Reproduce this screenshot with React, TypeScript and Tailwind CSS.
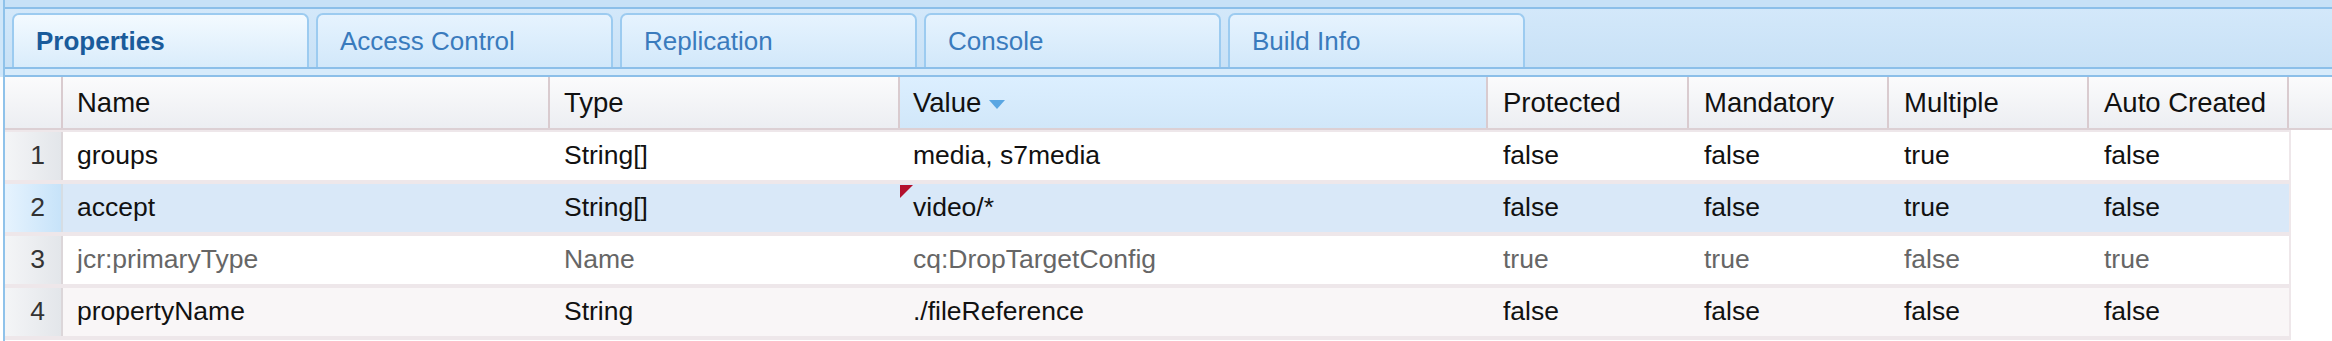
import React from "react";

type Row = {
  name: string;
  type: string;
  value: string;
  prot: string;
  mand: string;
  multi: string;
  auto: string;
};

const rows: Row[] = [
  { name: "groups", type: "String[]", value: "media, s7media", prot: "false", mand: "false", multi: "true", auto: "false" },
  { name: "accept", type: "String[]", value: "video/*", prot: "false", mand: "false", multi: "true", auto: "false" },
  { name: "jcr:primaryType", type: "Name", value: "cq:DropTargetConfig", prot: "true", mand: "true", multi: "false", auto: "true" },
  { name: "propertyName", type: "String", value: "./fileReference", prot: "false", mand: "false", multi: "false", auto: "false" },
];

const tabs = ["Properties", "Access Control", "Replication", "Console", "Build Info"];

function Tab({ label, active }: { label: string; active?: boolean }) {
  return (
    <div
      className={
        active
          ? "w-[297px] h-[54px] rounded-t-[7px] border-2 border-b-0 border-[#9ccbf0] bg-gradient-to-b from-[#f3faff] to-[#d9ecfb] flex items-center pl-[22px] text-[26px] font-bold text-[#1a5b9b]"
          : "w-[297px] h-[54px] rounded-t-[7px] border-2 border-b-0 border-[#9ccbf0] bg-gradient-to-b from-[#e6f3fe] to-[#d2e8fa] flex items-center pl-[22px] text-[26px] text-[#3a7bbd]"
      }
    >
      {label}
    </div>
  );
}

export default function App() {
  return (
    <div
      className="w-[2332px] h-[341px] bg-white overflow-hidden flex flex-col text-[#111]"
      style={{ fontFamily: '"Liberation Sans", Arial, sans-serif' }}
    >
      {/* tab strip */}
      <div className="bg-[#cfe6f9] pl-[3px]">
        <div className="border-l-2 border-[#8fc2ea]">
          <div className="h-[7px] bg-[#c7e1f7]" />
          <div className="h-[2px] bg-[#8cbfe9]" />
          <div className="h-[58px] pt-[4px] pl-[7px] flex gap-[7px] bg-gradient-to-b from-[#d3e8fa] to-[#c8e1f6]">
            {tabs.map((t, i) => (
              <Tab key={t} label={t} active={i === 0} />
            ))}
          </div>
          <div className="h-[2px] bg-[#8cbfe9]" />
          <div className="h-[6px] bg-[#d7ebfb]" />
          <div className="h-[2px] bg-[#8cbfe9]" />
        </div>
      </div>

      {/* grid */}
      <div className="pl-[3px] flex-1 flex flex-col">
        <div className="border-l-2 border-[#8fc2ea] flex-1 flex flex-col">
          {/* header */}
          <div className="h-[53px] flex text-[27.5px] border-b-2 border-[#dcd0d4] bg-gradient-to-b from-[#fbfbfc] to-[#eceef2]">
            <div className="w-[58px] border-r-2 border-[#d9cbcf]" />
            <div className="w-[487px] border-r-2 border-[#d9cbcf] flex items-center pl-[14px]">Name</div>
            <div className="w-[350px] border-r-2 border-[#d9cbcf] flex items-center pl-[14px]">Type</div>
            <div className="w-[588px] border-r-2 border-[#d9cbcf] flex items-center pl-[13px] bg-gradient-to-b from-[#dcefff] to-[#d1e7f9]">
              Value
              <svg className="ml-[8px] mt-[4px]" width="16" height="9" viewBox="0 0 16 9">
                <polygon points="0,0 16,0 8,9" fill="#5aa6e2" />
              </svg>
            </div>
            <div className="w-[201px] border-r-2 border-[#d9cbcf] flex items-center pl-[15px]">Protected</div>
            <div className="w-[200px] border-r-2 border-[#d9cbcf] flex items-center pl-[15px]">Mandatory</div>
            <div className="w-[200px] border-r-2 border-[#d9cbcf] flex items-center pl-[15px]">Multiple</div>
            <div className="w-[200px] border-r-2 border-[#d9cbcf] flex items-center pl-[15px]">Auto Created</div>
            <div className="flex-1" />
          </div>

          {/* rows */}
          <div className="w-[2286px] flex flex-col gap-[4px] pt-[2px] pb-[4px] pr-[2px] bg-[#eee7ea]">
            {rows.map((r, i) => {
              const selected = i === 1;
              const dim = i === 2;
              const bg = selected ? "bg-[#d9e8f8]" : i === 3 ? "bg-[#f9f6f7]" : "bg-white";
              const txt = dim ? "text-[#666]" : "text-[#111]";
              return (
                <div key={r.name} className={`h-[48px] flex text-[26.5px] ${bg} ${txt}`}>
                  <div
                    className={
                      selected
                        ? "w-[58px] border-r-2 border-[#d6dde4] flex items-center justify-end pr-[16px] text-[#333] bg-gradient-to-r from-[#e6f3fe] to-[#c7e3f9]"
                        : "w-[58px] border-r-2 border-[#dcd6d9] flex items-center justify-end pr-[16px] text-[#333] bg-gradient-to-r from-[#f4f5f7] to-[#e3e6ea]"
                    }
                  >
                    {i + 1}
                  </div>
                  <div className="w-[487px] flex items-center pl-[14px]">{r.name}</div>
                  <div className="w-[350px] flex items-center pl-[14px]">{r.type}</div>
                  <div className="w-[588px] flex items-center pl-[13px] relative">
                    {selected && (
                      <svg className="absolute left-0 top-[1px]" width="13" height="13" viewBox="0 0 13 13">
                        <polygon points="0,0 13,0 0,13" fill="#b3102c" />
                      </svg>
                    )}
                    {r.value}
                  </div>
                  <div className="w-[201px] flex items-center pl-[15px]">{r.prot}</div>
                  <div className="w-[200px] flex items-center pl-[15px]">{r.mand}</div>
                  <div className="w-[200px] flex items-center pl-[15px]">{r.multi}</div>
                  <div className="w-[200px] flex items-center pl-[15px]">{r.auto}</div>
                </div>
              );
            })}
          </div>
        </div>
      </div>
    </div>
  );
}
